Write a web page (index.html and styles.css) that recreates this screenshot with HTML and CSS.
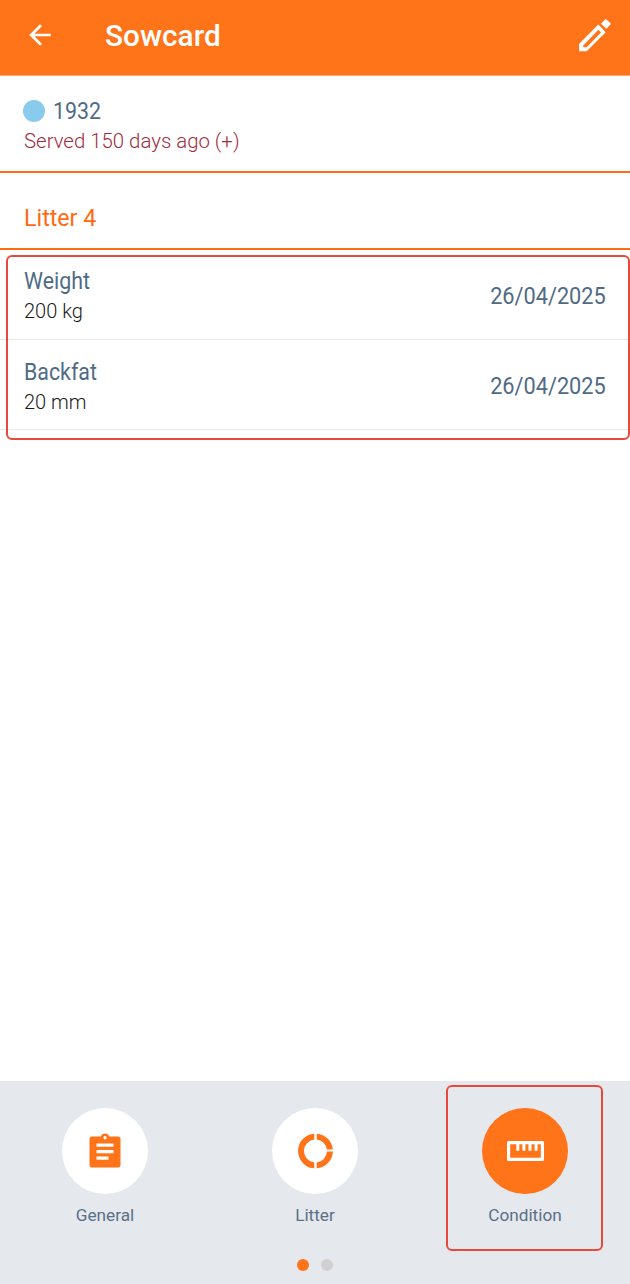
FILE: index.html
```html
<!DOCTYPE html>
<html lang="en">
<head>
    <meta charset="UTF-8">
    <meta name="viewport" content="width=device-width, initial-scale=1.0">
    <title>Sowcard</title>
    <link rel="stylesheet" href="styles.css">
</head>
<body>

<div class="app">
    <div class="header">
        <svg class="back-icon" viewBox="0 0 24 24"><path d="M20 11H7.83l5.59-5.59L12 4l-8 8 8 8 1.41-1.41L7.83 13H20z"/></svg>
        <h1>Sowcard</h1>
        <svg class="edit-icon" viewBox="0 0 34 34"><path fill-rule="evenodd" d="M23 5.800l4-4.300c.4-.4 1-.4 1.400 0l4 3.600c.4.4.4 1 0 1.400l-4 4.300zM1 26L20.300 6.500l7.400 7.700L8.700 33.200H1zM5.300 27.500v1.700h3.400L23 14.500l-2.700-2.700z"/></svg>
    </div>

    <div class="sow">
        <div class="sow-id"><span class="sow-dot"></span><span class="narrow">1932</span></div>
        <div class="sow-status">Served 150 days ago (+)</div>
    </div>

    <div class="litter">Litter 4</div>

    <div class="rows">
        <div class="row">
            <div>
                <div class="row-name narrow">Weight</div>
                <div class="row-value">200 kg</div>
            </div>
            <div class="row-date">26/04/2025</div>
        </div>
        <div class="row">
            <div>
                <div class="row-name narrow">Backfat</div>
                <div class="row-value">20 mm</div>
            </div>
            <div class="row-date">26/04/2025</div>
        </div>
    </div>

    <div class="bottom">
        <div class="tabs">
            <div class="tab">
                <div class="tab-circle">
                    <svg viewBox="0 0 32 36" width="32" height="36"><path fill="#ff7319" fill-rule="evenodd" d="M3 3.500h8.800a4.400 4.400 0 0 1 8.400 0H29a2.500 2.500 0 0 1 2.500 2.500V32a2.500 2.500 0 0 1-2.500 2.500H3A2.500 2.500 0 0 1 .5 32V6A2.500 2.500 0 0 1 3 3.500zM16 3a1.700 1.700 0 1 0 0 3.400A1.700 1.700 0 0 0 16 3zM7.500 10.500v3.200h17v-3.200zM7.500 17v3.200h17V17zM7.500 23.500v3.200h12v-3.200z"/></svg>
                </div>
                <div class="tab-label">General</div>
            </div>
            <div class="tab">
                <div class="tab-circle">
                    <svg viewBox="0 0 36 36" width="36" height="36"><path fill="#ff7319" d="M17.300.64V6.560A11.500 11.500 0 0 0 17.300 29.440V35.360A17.400 17.400 0 0 1 17.300.64zM19.700.64A17.400 17.400 0 0 1 35.830 16.400H29.890A11.500 11.500 0 0 0 19.700 6.560zM35.890 18.600A17.400 17.400 0 0 1 19.700 35.360V29.440A11.500 11.500 0 0 0 29.980 18.600z"/></svg>
                </div>
                <div class="tab-label">Litter</div>
            </div>
            <div class="tab">
                <div class="tab-circle tab-circle-active">
                    <svg viewBox="0 0 37 20" width="37" height="20"><path fill="#fff" fill-rule="evenodd" d="M1.500 0h34A1.500 1.500 0 0 1 37 1.500v17a1.500 1.500 0 0 1-1.500 1.500h-34A1.500 1.500 0 0 1 0 18.500v-17A1.500 1.500 0 0 1 1.500 0zM3.200 3.200v13.600h30.600V3.200h-3.200v6.500h-3V3.200h-3.100v6.500h-3V3.200h-3.100v6.500h-3V3.200h-3.100v6.500h-3V3.200z"/></svg>
                </div>
                <div class="tab-label">Condition</div>
            </div>
        </div>
        <div class="dots">
            <span class="dot dot-active"></span>
            <span class="dot"></span>
        </div>
    </div>

    <!-- red callouts drawn on top of the screenshot -->
    <div class="callout callout-rows"></div>
    <div class="callout callout-tab"></div>
</div>

</body>
</html>
```

FILE: styles.css
```css
html, body {
    margin: 0;
    padding: 0;
}
body {
    font-family: Roboto, "Liberation Sans", sans-serif;
    background-color: #fff;
}
.app {
    position: relative;
    width: 630px;
    height: 1284px;
    display: flex;
    flex-direction: column;
    overflow: hidden;
}
.header {
    flex: none;
    height: 69px;
    padding: 0 18px 6px 24px;
    background-color: #ff7319;
    border-bottom: 1px solid #ffa46a;
    display: flex;
    align-items: center;
    color: #fff;
}
.header h1 {
    margin: 2px 0 0 39px;
    font-size: 29.8px;
    font-weight: 500;
    flex: 1;
}
.back-icon {
    width: 32px;
    height: 32px;
    fill: #fff;
    margin-right: 10px;
    flex: none;
}
.edit-icon {
    width: 34px;
    height: 34px;
    fill: #fff;
    flex: none;
}
.narrow {
    transform: scaleX(0.89);
    transform-origin: left;
}
.sow {
    height: 97px;
    flex: none;
    box-sizing: border-box;
    padding: 21px 24px 0;
    border-bottom: 2px solid #ff6a13;
}
.sow-id {
    display: flex;
    align-items: center;
    font-size: 24px;
    line-height: 28px;
    color: #4f6b85;
}
.sow-dot {
    width: 22px;
    height: 22px;
    border-radius: 50%;
    background-color: #89cbec;
    margin: 0 8px 0 -1px;
}
.sow-status {
    margin-top: 3px;
    font-size: 20.4px;
    line-height: 26px;
    font-weight: 300;
    color: #a02c3c;
}
.litter {
    height: 77px;
    flex: none;
    box-sizing: border-box;
    display: flex;
    align-items: center;
    padding: 14px 24px 0;
    font-size: 23.2px;
    color: #ff6a13;
    border-bottom: 2px solid #ff6a13;
}
.rows {
    margin-top: 8px;
    flex: 1;
}
.row {
    display: flex;
    justify-content: space-between;
    align-items: center;
    height: 82px;
    box-sizing: border-box;
    padding: 0 24px 6px;
    border-bottom: 1px solid #e8e8e8;
}
.row + .row {
    height: 90px;
    padding: 4px 24px 0;
}
.row + .row .row-date {
    margin-bottom: 2px;
}
.row-name {
    font-size: 24px;
    line-height: 30px;
    color: #4f6b85;
}
.row-value {
    font-size: 20px;
    line-height: 30px;
    font-weight: 300;
    color: #1a1a1a;
}
.row-date {
    font-size: 24px;
    color: #4f6b85;
    transform: scaleX(0.905);
    transform-origin: right;
}
.bottom {
    height: 203px;
    flex: none;
    background-color: #e5e8ed;
    padding-top: 27px;
    box-sizing: border-box;
}
.tabs {
    display: grid;
    grid-template-columns: repeat(3, 1fr);
}
.tab {
    display: flex;
    flex-direction: column;
    align-items: center;
}
.tab-circle {
    width: 86px;
    height: 86px;
    border-radius: 50%;
    background-color: #fff;
    display: flex;
    align-items: center;
    justify-content: center;
}
.tab-circle-active {
    background-color: #ff7319;
}
.tab-label {
    margin-top: 10px;
    font-size: 17.2px;
    line-height: 22px;
    color: #5a7088;
}
.dots {
    display: flex;
    justify-content: center;
    gap: 12px;
    margin-top: 33px;
}
.dot {
    width: 12px;
    height: 12px;
    border-radius: 50%;
    background-color: #d0d0d0;
}
.dot-active {
    background-color: #ff7319;
}
.callout {
    position: absolute;
    box-sizing: border-box;
    border: 2px solid #e8493a;
    border-radius: 6px;
}
.callout-rows {
    left: 6px;
    top: 255px;
    width: 624px;
    height: 185px;
}
.callout-tab {
    left: 446px;
    top: 1085px;
    width: 157px;
    height: 166px;
}
```
